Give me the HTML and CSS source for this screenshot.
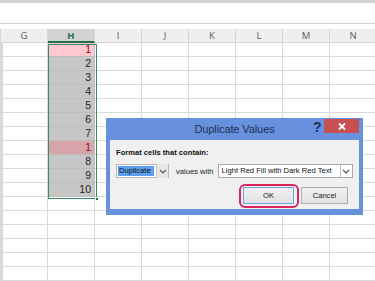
FILE: index.html
```html
<!DOCTYPE html>
<html>
<head>
<meta charset="utf-8">
<link rel="stylesheet" href="styles.css">
</head>
<body>
<div class="app">
  <div class="topband"></div>
  <div class="formula"></div>
  <div class="gap"></div>
  <div class="sheet">
    <div class="hdr edge"></div><div class="hdr">G</div><div class="hdr sel">H</div><div class="hdr">I</div><div class="hdr">J</div><div class="hdr">K</div><div class="hdr">L</div><div class="hdr">M</div><div class="hdr">N</div>
  </div>
  <div class="sheet body" id="rows"></div>
  <div class="selbox"><span class="handle"></span></div>

  <div class="dialog">
    <div class="titlebar">
      <span class="title">Duplicate Values</span>
      <span class="help">?</span>
      <span class="close">
        <svg width="10" height="9" viewBox="0 0 10 9"><path d="M2 1.5 L8 7.5 M8 1.5 L2 7.5" stroke="#fff" stroke-width="1.8" fill="none"/></svg>
      </span>
    </div>
    <div class="dbody">
      <div class="label">Format cells that contain:</div>
      <div class="line">
        <div class="combo small">
          <span class="val hl">Duplicate</span>
          <span class="arrow">
            <svg width="8" height="5" viewBox="0 0 8 5"><path d="M1 1 L4 4 L7 1" stroke="#555" stroke-width="1.2" fill="none"/></svg>
          </span>
        </div>
        <span class="mid">values with</span>
        <div class="combo wide">
          <span class="val">Light Red Fill with Dark Red Text</span>
          <span class="arrow">
            <svg width="8" height="5" viewBox="0 0 8 5"><path d="M1 1 L4 4 L7 1" stroke="#555" stroke-width="1.2" fill="none"/></svg>
          </span>
        </div>
      </div>
      <div class="buttons">
        <button class="btn ok">OK</button>
        <button class="btn cancel">Cancel</button>
      </div>
    </div>
    <div class="ring"></div>
  </div>
</div>
<script>
  var vals = [["1","top"],["2",""],["3",""],["4",""],["5",""],["6",""],["7",""],["1","dup"],["8",""],["9",""],["10",""],["",""],["",""],["",""],["",""],["",""],["",""]];
  var rows = document.getElementById('rows');
  vals.forEach(function(v, i){
    var html = '<div class="c edge"></div><div class="c"></div>';
    if (i < 11) html += '<div class="c h ' + v[1] + '">' + v[0] + '</div>';
    else html += '<div class="c"></div>';
    for (var k = 0; k < 6; k++) html += '<div class="c"></div>';
    rows.insertAdjacentHTML('beforeend', html);
  });
</script>
</body>
</html>
```
FILE: styles.css
```css
* { box-sizing: border-box; }
html, body { margin: 0; padding: 0; background: #fff; }
body { width: 375px; height: 281px; overflow: hidden; font-family: "Liberation Sans", sans-serif; }
.app { position: relative; width: 375px; height: 281px; overflow: hidden; }
.topband { height: 3px; background: #d4d4d4; }
.formula { height: 21px; border-bottom: 1px solid #d0d0d0; }
.gap { height: 5px; }
.sheet { display: grid; grid-template-columns: 1px repeat(8, 47px); }
.hdr { height: 14px; background: #efefef; border-right: 1px solid #d6d6d6; border-bottom: 1px solid #d6d6d6; font-family: "Open Sans", sans-serif; font-size: 9.5px; line-height: 13px; color: #5a5a5a; text-align: center; }
.hdr.edge { border: none; background: #d6d6d6; }
.hdr.sel { background: #d3d3d3; color: #217346; font-weight: bold; border-bottom: 2px solid #217346; }
.body { grid-auto-rows: 14px; }
.c { border-right: 1px solid #dadada; border-bottom: 1px solid #dadada; font-size: 10.5px; line-height: 13px; text-align: right; padding-right: 3px; color: #222; }
.c.edge { border: none; background: #dadada; }
.c.h { background: #c6c6c6; border-right: 1px solid #bdbdbd; border-bottom: 1px solid #bdbdbd; }
.c.h.top { background: #ffc7ce; color: #9c0006; }
.c.h.dup { background: #d6a4aa; color: #8b1020; }
.selbox { position: absolute; left: 48px; top: 44px; width: 49px; height: 155px; border: 1.5px solid #3c8a5e; pointer-events: none; }
.handle { position: absolute; right: -3px; bottom: -3px; width: 4px; height: 4px; background: #217346; border: 1px solid #fff; }

.dialog { position: absolute; left: 106px; top: 118px; width: 257px; height: 97px; background: #6791dd; padding: 0 4px 6px 4px; display: flex; flex-direction: column; }
.titlebar { position: relative; height: 22px; flex: none; }
.title { position: absolute; left: 0; right: 0; top: 3px; text-align: center; font-size: 11px; letter-spacing: -0.1px; line-height: 16px; color: #1b2f58; }
.help { position: absolute; left: 203px; top: 1px; font-size: 14px; font-weight: bold; color: #1d2c52; line-height: 16px; }
.close { position: absolute; right: 0; top: 1px; width: 35px; height: 14px; background: #c75050; display: flex; align-items: center; justify-content: center; }
.dbody { flex: 1; background: #f0f0f0; padding: 8px 5px 0 6px; display: flex; flex-direction: column; }
.label { font-weight: bold; font-size: 7.6px; line-height: 10px; color: #111; }
.line { display: flex; align-items: center; margin-top: 6px; height: 14px; }
.combo { height: 14px; display: flex; align-items: stretch; font-size: 7.6px; color: #111; }
.combo.small { width: 53px; border: 1px solid #b9b9b9; background: #fff; padding: 1px 0 1px 1px; }
.combo.small .val { width: 38px; background: #5b9fee; line-height: 10px; padding-left: 1px; }
.combo.small .arrow { margin-left: 2px; width: 12px; background: #e6e6e6; border-left: 1px solid #c6c6c6; margin-top: -2px; margin-bottom: -2px; }
.arrow { display: flex; align-items: center; justify-content: center; }
.mid { margin-left: 7px; font-size: 7.6px; color: #222; white-space: nowrap; }
.combo.wide { margin-left: 4px; width: 135px; border: 1px solid #a9a9a9; background: #fff; }
.combo.wide .val { flex: 1; line-height: 12px; padding-left: 3px; white-space: nowrap; overflow: hidden; }
.combo.wide .arrow { width: 12px; border-left: 1px solid #c0c0c0; }
.buttons { display: flex; justify-content: flex-end; gap: 7px; margin-top: 9px; padding-right: 6px; }
.btn { height: 17px; padding: 0; font-family: "Liberation Sans", sans-serif; font-size: 7.6px; color: #222; background: linear-gradient(#f2f2f2, #e2e2e2); border: 1px solid #adadad; border-radius: 0; }
.btn.ok { width: 51px; border-color: #6ca5e0; }
.btn.cancel { width: 47px; }
.ring { position: absolute; left: 133px; top: 66px; width: 60px; height: 24px; border: 2px solid #d8255f; border-radius: 6px; }
```
